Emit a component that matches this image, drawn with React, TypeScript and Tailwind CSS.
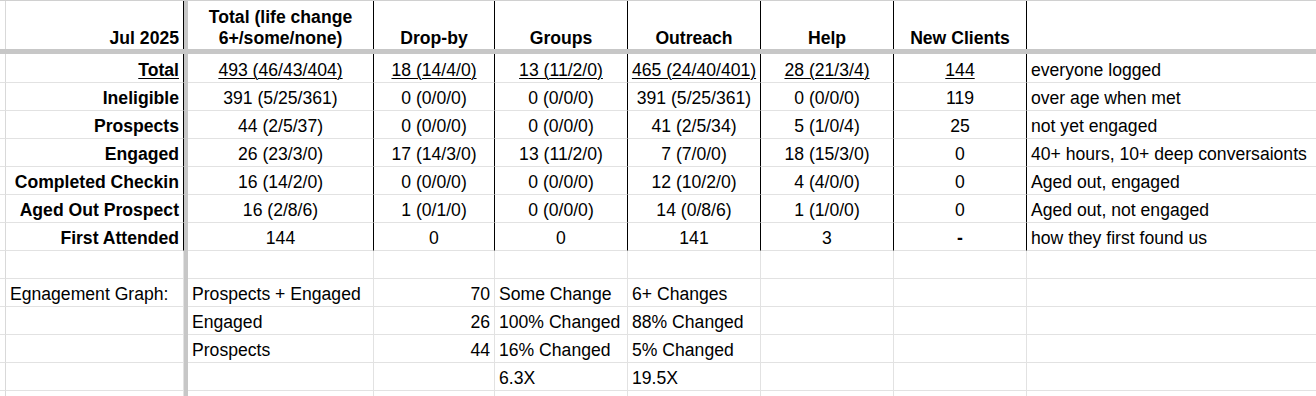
import clsx from "clsx";

type Cell = { t?: string; a?: "l" | "c" | "r"; b?: boolean; u?: boolean };

// column widths: A | (frozen bar) | B .. G | H
const widths = [
  "w-[178px]",
  "w-[186px]",
  "w-[121px]",
  "w-[133px]",
  "w-[133px]",
  "w-[133px]",
  "w-[133px]",
  "flex-1",
];

const align = {
  l: "justify-start text-left",
  c: "justify-center text-center",
  r: "justify-end text-right",
};

const c = (t: string, u = false): Cell => ({ t, a: "c", u });
const label = (t: string, u = false): Cell => ({ t, a: "r", b: true, u });
const note = (t: string): Cell => ({ t, a: "l" });

const header: Cell[] = [
  { t: "Jul 2025", a: "r", b: true },
  { t: "Total (life change\n6+/some/none)", a: "c", b: true },
  { t: "Drop-by", a: "c", b: true },
  { t: "Groups", a: "c", b: true },
  { t: "Outreach", a: "c", b: true },
  { t: "Help", a: "c", b: true },
  { t: "New Clients", a: "c", b: true },
  {},
];

const stats: Cell[][] = [
  [label("Total", true), c("493 (46/43/404)", true), c("18 (14/4/0)", true), c("13 (11/2/0)", true), c("465 (24/40/401)", true), c("28 (21/3/4)", true), c("144", true), note("everyone logged")],
  [label("Ineligible"), c("391 (5/25/361)"), c("0 (0/0/0)"), c("0 (0/0/0)"), c("391 (5/25/361)"), c("0 (0/0/0)"), c("119"), note("over age when met")],
  [label("Prospects"), c("44 (2/5/37)"), c("0 (0/0/0)"), c("0 (0/0/0)"), c("41 (2/5/34)"), c("5 (1/0/4)"), c("25"), note("not yet engaged")],
  [label("Engaged"), c("26 (23/3/0)"), c("17 (14/3/0)"), c("13 (11/2/0)"), c("7 (7/0/0)"), c("18 (15/3/0)"), c("0"), note("40+ hours, 10+ deep conversaionts")],
  [label("Completed Checkin"), c("16 (14/2/0)"), c("0 (0/0/0)"), c("0 (0/0/0)"), c("12 (10/2/0)"), c("4 (4/0/0)"), c("0"), note("Aged out, engaged")],
  [label("Aged Out Prospect"), c("16 (2/8/6)"), c("1 (0/1/0)"), c("0 (0/0/0)"), c("14 (0/8/6)"), c("1 (1/0/0)"), c("0"), note("Aged out, not engaged")],
  [label("First Attended"), c("144"), c("0"), c("0"), c("141"), c("3"), { t: "-", a: "c", b: true }, note("how they first found us")],
];

const L = (t: string): Cell => ({ t, a: "l" });
const R = (t: string): Cell => ({ t, a: "r" });
const E: Cell = {};

const graph: Cell[][] = [
  [E, E, E, E, E, E, E, E],
  [L("Egnagement Graph:"), L("Prospects + Engaged"), R("70"), L("Some Change"), L("6+ Changes"), E, E, E],
  [E, L("Engaged"), R("26"), L("100% Changed"), L("88% Changed"), E, E, E],
  [E, L("Prospects"), R("44"), L("16% Changed"), L("5% Changed"), E, E, E],
  [E, E, E, L("6.3X"), L("19.5X"), E, E, E],
  [E, E, E, E, E, E, E, E],
  [E, E, E, E, E, E, E, E],
];

function Row({ cells, dark, head, h }: { cells: Cell[]; dark?: boolean; head?: boolean; h: string }) {
  return (
    <div className={clsx("flex", h)}>
      <div className={clsx("w-[6px] shrink-0 border-r border-[#d9d9d9]", !head && "border-b border-b-[#e2e2e2]")} />
      {cells.map((cell, i) => (
        <div key={i} className="contents">
          <div
            className={clsx(
              "flex items-end px-[4px] overflow-hidden whitespace-pre leading-[21px]",
              head ? "pb-0" : "pb-[1px]",
              widths[i],
              i < 7 && "shrink-0",
              align[cell.a ?? "l"],
              i < 7 && (dark ? "border-r border-black" : "border-r border-[#e2e2e2]"),
              !head && "border-b border-b-[#e2e2e2]",
              cell.b && "font-bold",
              cell.u && "underline underline-offset-[2px] decoration-1"
            )}
          >
            {cell.t}
          </div>
          {i === 0 && <div className="w-[4px] shrink-0 bg-[#c7c7c7]" />}
        </div>
      ))}
    </div>
  );
}

export default function App() {
  return (
    <div className="w-[1316px] h-[396px] overflow-hidden bg-white text-black text-[17.6px] font-['Liberation_Sans',Arial,sans-serif] border-t border-[#d0d0d0]">
      <Row cells={header} dark head h="h-[48px]" />
      <div className="h-[5px] bg-[#c7c7c7]" />
      {stats.map((r, i) => (
        <Row key={i} cells={r} dark h={i === 0 ? "h-[29px]" : "h-[28px]"} />
      ))}
      {graph.map((r, i) => (
        <Row key={"g" + i} cells={r} h="h-[28px]" />
      ))}
    </div>
  );
}
